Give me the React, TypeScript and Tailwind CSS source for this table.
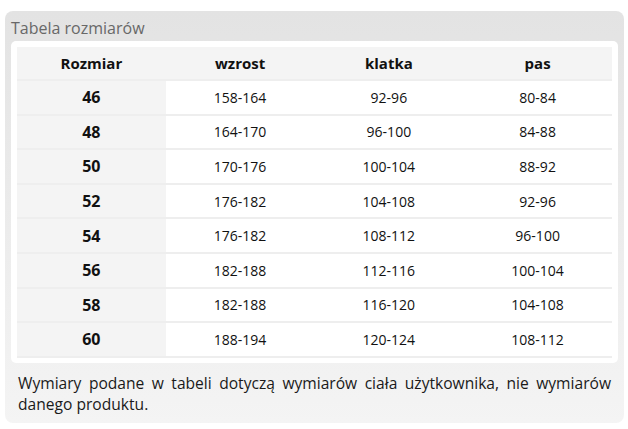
import React from 'react';

const rows: [string, string, string, string][] = [
  ['46', '158-164', '92-96', '80-84'],
  ['48', '164-170', '96-100', '84-88'],
  ['50', '170-176', '100-104', '88-92'],
  ['52', '176-182', '104-108', '92-96'],
  ['54', '176-182', '108-112', '96-100'],
  ['56', '182-188', '112-116', '100-104'],
  ['58', '182-188', '116-120', '104-108'],
  ['60', '188-194', '120-124', '108-112'],
];

export default function App() {
  return (
    <div className="w-[628px] h-[429px] bg-white pt-[11px] pl-[5px]" style={{ fontFamily: '"Open Sans", "Liberation Sans", sans-serif' }}>
      <div className="w-[619px] h-[412px] rounded-lg bg-gradient-to-b from-[#e3e3e3] to-[#f4f4f4] px-[6px] pt-[6px]">
        <h2 className="text-[16px] leading-[22px] text-[#686868] mb-[2px]">Tabela rozmiarów</h2>

        <div className="bg-white rounded-[5px] p-[6px] pb-[5px]">
          <div className="grid grid-cols-4 text-[#111]">
            {['Rozmiar', 'wzrost', 'klatka', 'pas'].map((h) => (
              <div key={h} className="h-[32px] bg-[#f4f4f4] flex items-center justify-center text-[15px] font-bold">
                {h}
              </div>
            ))}
          </div>
          {rows.map((r) => (
            <div key={r[0]} className="grid grid-cols-4 border-t-2 border-[#eeeeee] text-[#111]">
              <div className="h-[32.6px] bg-[#f4f4f4] flex items-center justify-center text-[16px] font-bold">{r[0]}</div>
              <div className="h-[32.6px] flex items-center justify-center text-[14px]">{r[1]}</div>
              <div className="h-[32.6px] flex items-center justify-center text-[14px]">{r[2]}</div>
              <div className="h-[32.6px] flex items-center justify-center text-[14px]">{r[3]}</div>
            </div>
          ))}
          <div className="h-[2px] bg-[#eeeeee]" />
        </div>

        <p className="mt-[10px] px-[7px] text-[15.6px] leading-[21.6px] text-[#1a1a1a] text-justify">
          Wymiary podane w tabeli dotyczą wymiarów ciała użytkownika, nie wymiarów danego produktu.
        </p>
      </div>
    </div>
  );
}
